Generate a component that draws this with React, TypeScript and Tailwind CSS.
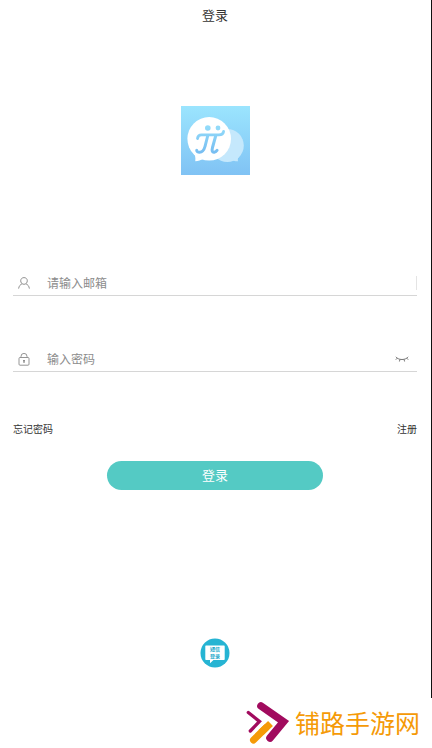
import React from 'react';

function Logo() {
  return (
    <svg viewBox="0 0 69 69" className="h-[69px] w-[69px]" role="img" aria-label="logo">
      <defs>
        <linearGradient id="sky" x1="0" y1="0" x2="0" y2="1">
          <stop offset="0" stopColor="#9be5fe" />
          <stop offset="1" stopColor="#80c2f4" />
        </linearGradient>
        <linearGradient id="ink" gradientUnits="userSpaceOnUse" x1="0" y1="20" x2="0" y2="48">
          <stop offset="0" stopColor="#93dcfa" />
          <stop offset="1" stopColor="#76bcf1" />
        </linearGradient>
      </defs>
      <rect width="69" height="69" fill="url(#sky)" />
      <g fill="#c5e8fc">
        <circle cx="46.300" cy="39.500" r="16.500" />
        <path d="M59 49c-2 1.500-2.500 3.500-2 6.300-2.500.2-4-.5-6-1.600Z" />
      </g>
      <g fill="#fff">
        <circle cx="28.200" cy="32.800" r="21.800" />
        <path d="M11.500 46c2.500 2 3.300 5 2.800 9.300 3.200 0 5.200-1.300 8.200-2.500Z" />
      </g>
      <g fill="none" stroke="url(#ink)" strokeLinecap="round" strokeLinejoin="round">
        <path d="M16.500 32.500c.3-2.500 1.500-3.700 4-3.700H38c2.500 0 4.200-1 4.600-3.400" strokeWidth="2.800" />
        <path d="M26.800 29.500 24 40.500c-1.100 4-3 5.700-5.500 5.700-1.500 0-2.800-.7-2.800-2" strokeWidth="3" />
        <path d="M34.800 29.500 31.500 41.500c-1 3.700 0 5 1.800 4.700 1.300-.2 2.200-.9 2.800-1.900" strokeWidth="3" />
      </g>
      <circle cx="26.800" cy="22" r="2.800" fill="url(#ink)" />
      <circle cx="37" cy="22" r="2.400" fill="#92daf9" />
    </svg>
  );
}

function UserIcon() {
  return (
    <svg viewBox="0 0 12 12" className="h-3 w-3" fill="none" stroke="#858585" strokeWidth="0.900" aria-hidden="true">
      <path d="M6 .6c2 0 3.300 1.400 3.300 3.200S7.900 7.300 6 7.300 2.700 5.600 2.700 3.800 4 .6 6 .6Z" />
      <path d="M.6 11.600C1 9 2.300 7.500 4.200 6.700M11.400 11.600C11 9 9.700 7.500 7.800 6.700" />
    </svg>
  );
}

function LockIcon() {
  return (
    <svg viewBox="0 0 12 13" className="h-[13px] w-3" fill="none" stroke="#8a8a8a" strokeWidth="0.900" aria-hidden="true">
      <rect x="1" y="4.500" width="10" height="7.700" rx="1" />
      <path d="M3 4.500V3.400a3 3 0 0 1 6 0V4.500" />
      <path d="M6 7v3" stroke="#666" />
      <path d="M5 7.800h2" stroke="#777" />
    </svg>
  );
}

function ClosedEyeIcon() {
  return (
    <svg viewBox="0 0 14 6" className="h-1.5 w-3.5" fill="none" stroke="#777" aria-hidden="true">
      <path d="M.8.800C2 2.300 4 3.500 7 3.500s5-1.200 6.200-2.700M2.200 2.200.8 3.700M11.800 2.200l1.400 1.500M5 3.300l-.6 2.200M9 3.300l.6 2.200" />
    </svg>
  );
}

function SmsIcon() {
  return (
    <svg viewBox="0 0 30 30" className="h-[30px] w-[30px]" aria-hidden="true">
      <circle cx="15" cy="15" r="14.500" fill="#26b4d3" />
      <path d="M6 7.500h18a.7.7 0 0 1 .7.700v13a.7.7 0 0 1-.7.700H13.500L10 25.300V21.900H6a.7.7 0 0 1-.7-.7v-13a.7.7 0 0 1 .7-.7Z" fill="#fff" />
      <g fill="#26a9cb" fontSize="5" fontWeight="700" textAnchor="middle">
        <text x="15" y="13">短信</text>
        <text x="15" y="20">登录</text>
      </g>
    </svg>
  );
}

function SiteMark() {
  return (
    <svg viewBox="0 0 50 50" className="h-[50px] w-[50px]" fill="none" strokeLinecap="round" aria-hidden="true">
      <path d="M5.300 14.500 16.500 23.500 7.300 33" stroke="#a10b5e" strokeWidth="3.300" />
      <path d="M18 8 40.500 23.700 27 40" stroke="#a10b5e" strokeWidth="7.600" />
      <path d="M26.500 27.500 10 43" stroke="#fff" strokeWidth="8" strokeLinecap="butt" />
      <path d="M27.500 25.500 18 34.500" stroke="#f59a07" strokeWidth="7" strokeLinecap="butt" />
      <path d="M23 29.800 10.500 42" stroke="#f59a07" strokeWidth="7" />
    </svg>
  );
}

export default function App() {
  return (
    <div className="min-h-screen bg-white font-['Noto_Sans_CJK_SC',sans-serif] text-[#333]">
      <main className="flex h-[698px] flex-col border-r border-[#111] pr-3.5 pl-[13px]">
        <h1 className="h-[31px] text-center text-[13px] leading-[29px]">登录</h1>
        <div className="mt-[75px] flex justify-center">
          <Logo />
        </div>

        <form className="mt-24 flex flex-col" onSubmit={(e) => e.preventDefault()}>
          <div className="flex h-[25px] items-center border-b border-[#d6d6d6] pl-[5px]">
            <label htmlFor="email" aria-label="邮箱">
              <UserIcon />
            </label>
            <input
              id="email"
              type="email"
              placeholder="请输入邮箱"
              className="ml-[17px] h-5 min-w-0 flex-1 pb-px text-xs outline-none placeholder:text-[#8c8c8c]"
            />
            <span className="h-3.5 w-px bg-[#e4e4e4]" />
          </div>

          <div className="mt-[51px] flex h-[25px] items-center border-b border-[#d6d6d6] pr-2 pl-[5px]">
            <label htmlFor="password" aria-label="密码">
              <LockIcon />
            </label>
            <input
              id="password"
              type="password"
              placeholder="输入密码"
              className="ml-[17px] h-5 min-w-0 flex-1 pb-px text-xs outline-none placeholder:text-[#8c8c8c]"
            />
            <button type="button" aria-label="显示密码">
              <ClosedEyeIcon />
            </button>
          </div>

          <div className="mt-12 flex h-4 items-center justify-between text-[10px]">
            <a href="#forgot">忘记密码</a>
            <a href="#register">注册</a>
          </div>

          <button
            type="submit"
            className="mt-[25px] h-[29px] w-[216px] self-center rounded-full bg-[#54cac4] pb-0.5 text-[13px] text-white"
          >
            登录
          </button>
        </form>

        <button type="button" aria-label="短信登录" className="mt-[148px] self-center">
          <SmsIcon />
        </button>
      </main>

      <footer className="flex h-[50px] items-start justify-end gap-0.5 pr-3">
        <SiteMark />
        <span className="text-[25px] leading-[48px] text-[#f59a07]">铺路手游网</span>
      </footer>
    </div>
  );
}
